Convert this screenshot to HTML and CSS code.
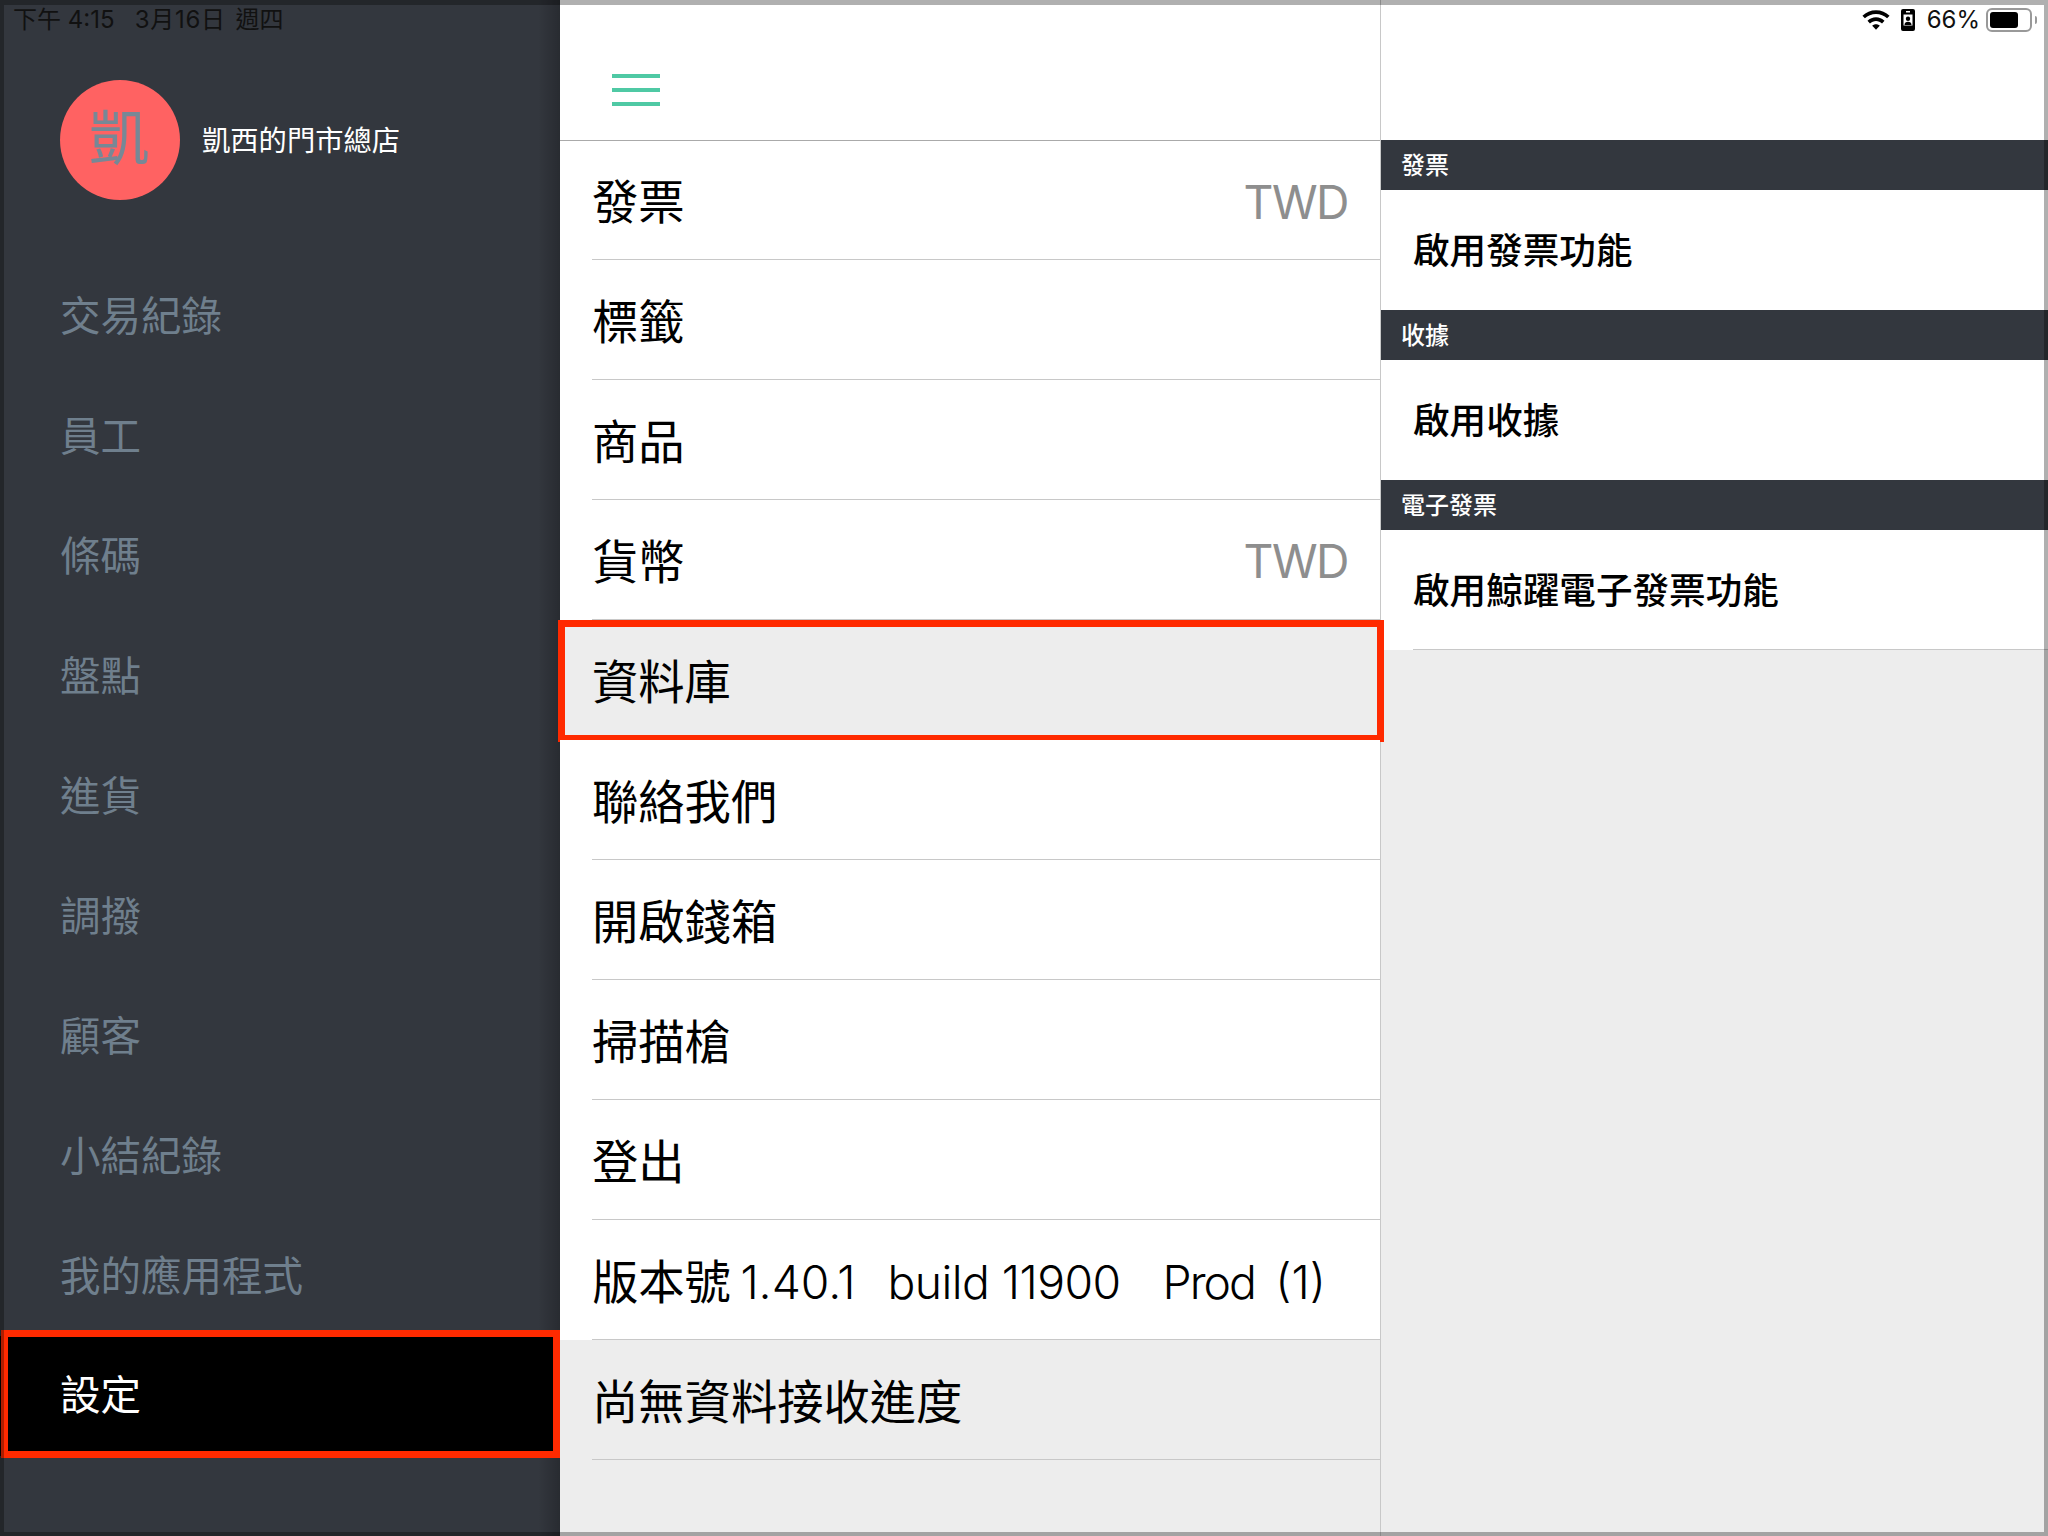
FILE: index.html
```html
<!DOCTYPE html>
<html lang="zh-Hant">
<head>
<meta charset="utf-8">
<title>設定</title>
<link rel="stylesheet" href="styles.css">
</head>
<body>
<div class="app">
  <aside class="sidebar">
    <div class="store">
      <div class="avatar">凱</div>
      <div class="store-name">凱西的門市總店</div>
    </div>
    <nav class="nav">
      <div class="nav-item">交易紀錄</div>
      <div class="nav-item">員工</div>
      <div class="nav-item">條碼</div>
      <div class="nav-item">盤點</div>
      <div class="nav-item">進貨</div>
      <div class="nav-item">調撥</div>
      <div class="nav-item">顧客</div>
      <div class="nav-item">小結紀錄</div>
      <div class="nav-item">我的應用程式</div>
      <div class="nav-item nav-active">設定<span class="callout callout-nav"></span></div>
    </nav>
  </aside>
  <main class="menu">
    <header class="menu-head">
      <div class="burger"><span></span><span></span><span></span></div>
    </header>
    <div class="list">
      <div class="row"><div class="row-in"><span>發票</span><span class="val">TWD</span></div></div>
      <div class="row"><div class="row-in"><span>標籤</span></div></div>
      <div class="row"><div class="row-in"><span>商品</span></div></div>
      <div class="row"><div class="row-in"><span>貨幣</span><span class="val">TWD</span></div></div>
      <div class="row row-sel"><div class="row-in"><span>資料庫</span></div><span class="callout callout-row"></span></div>
      <div class="row"><div class="row-in"><span>聯絡我們</span></div></div>
      <div class="row"><div class="row-in"><span>開啟錢箱</span></div></div>
      <div class="row"><div class="row-in"><span>掃描槍</span></div></div>
      <div class="row"><div class="row-in"><span>登出</span></div></div>
      <div class="row"><div class="row-in"><span class="ver"><span class="ver-cjk">版本號</span><span class="ver-code">1.40.1</span><span class="ver-build">build 11900</span><span class="ver-prod">Prod</span><span class="ver-num">(1)</span></span></div></div>
      <div class="row row-grey"><div class="row-in"><span>尚無資料接收進度</span></div></div>
    </div>
  </main>
  <section class="detail">
    <div class="detail-head"></div>
    <div class="sec-title">發票</div>
    <div class="sec-item">啟用發票功能</div>
    <div class="sec-title">收據</div>
    <div class="sec-item">啟用收據</div>
    <div class="sec-title">電子發票</div>
    <div class="sec-item sec-last"><div class="sec-last-in">啟用鯨躍電子發票功能</div></div>
  </section>
</div>

<div class="status">
  <div class="status-left">下午 4:15&nbsp;&nbsp; <span class="status-date">3月16日</span> 週四</div>
  <div class="status-right">
    <svg class="ic-wifi" width="28" height="20" viewBox="1 3 26 18.500"><path d="M14 3.200c-4.900 0-9.300 1.900-12.600 5l2.300 2.500c2.700-2.500 6.300-4 10.300-4s7.600 1.500 10.300 4l2.300-2.500c-3.300-3.100-7.700-5-12.600-5z"/><path d="M14 9.800c-3 0-5.800 1.200-7.900 3.100l2.300 2.500c1.500-1.300 3.500-2.200 5.600-2.200s4.100.9 5.600 2.200l2.300-2.500c-2.100-1.900-4.900-3.100-7.900-3.100z"/><path d="M14 16.200c-1.400 0-2.600.5-3.500 1.300l3.500 3.800 3.500-3.800c-.9-.8-2.100-1.300-3.500-1.300z"/></svg>
    <svg class="ic-lock" width="14" height="22" viewBox="0 0 14 22"><path fill-rule="evenodd" d="M2 0h10a2 2 0 0 1 2 2v18a2 2 0 0 1-2 2H2a2 2 0 0 1-2-2V2a2 2 0 0 1 2-2zm3 2v1.500h4V2zM2.500 5.500v11h9v-11zM7 7.500a2.200 2.200 0 1 1 0 4.400 2.200 2.200 0 0 1 0-4.400zM3.500 16c0-2 1.500-3.200 3.500-3.200s3.500 1.200 3.500 3.200z"/></svg>
    <span class="pct">66%</span>
    <div class="battery"><div class="battery-fill"></div></div>
    <div class="battery-nub"></div>
  </div>
</div>
<div class="frame"></div>
</body>
</html>
```
FILE: styles.css
```css
* { box-sizing: border-box; }
html, body { margin: 0; padding: 0; }
body {
  width: 2048px;
  height: 1536px;
  overflow: hidden;
  position: relative;
  font-family: Inter, "Noto Sans CJK TC", sans-serif;
  font-weight: 400;
  color: #000;
  background: #ededed;
}
.app { display: flex; height: 1536px; }

/* sidebar */
.sidebar {
  width: 560px;
  flex: none;
  background: #33373e;
  background-image: linear-gradient(to left, rgba(0,0,0,.22), rgba(0,0,0,0) 22px);
}
.store {
  display: flex;
  align-items: flex-start;
  gap: 22px;
  padding: 80px 0 0 60px;
  height: 256px;
}
.avatar {
  width: 120px;
  height: 120px;
  border-radius: 50%;
  background: #ff6262;
  color: #778896;
  font-size: 60px;
  line-height: 116px;
  text-align: center;
  padding-right: 2px;
}
.store-name {
  color: #fff;
  font-size: 28.300px;
  line-height: 122px;
}
.nav-item {
  height: 120px;
  line-height: 121px;
  padding-left: 60px;
  font-size: 40.500px;
  color: #6f7f8d;
  position: relative;
}
.nav-active { background: #000; color: #fff; line-height: 120px; }

/* callouts */
.callout {
  position: absolute;
  border: 7px solid #ff2a00;
  pointer-events: none;
}
.callout-nav { left: 1px; right: 0; top: -6px; bottom: -2px; }
.callout-row { left: -2px; right: -4px; top: 0; bottom: -2px; }

/* menu */
.menu {
  width: 821px;
  flex: none;
  display: flex;
  flex-direction: column;
  border-right: 1px solid #c8c8c8;
  background: #ededed;
}
.menu-head {
  height: 141px;
  background: #fff;
  border-bottom: 1px solid #aaa;
  padding: 74px 0 0 52px;
}
.burger { width: 48px; display: flex; flex-direction: column; gap: 10px; }
.burger span { display: block; height: 4px; background: #4fc9a4; }
.list { flex: 1; }
.row {
  height: 120px;
  padding-left: 32px;
  background: #fff;
  position: relative;
}
.row:first-child { height: 119px; }
.row-sel, .row-grey { background: #ededed; }
.row-in {
  height: 100%;
  display: flex;
  align-items: center;
  justify-content: space-between;
  padding-right: 32px;
  padding-bottom: 3px;
  border-bottom: 1px solid #c8c8c8;
  font-size: 46.300px;
}
.val { color: #8e8e8e; position: relative; top: 3px; letter-spacing: -1.500px; }
.ver { display: flex; align-items: baseline; font-weight: 350; }
.ver-cjk { font-weight: 400; }
.ver-code { margin-left: 9.500px; }
.ver-build { margin-left: 32px; letter-spacing: -.55px; }
.ver-prod { margin-left: 42px; letter-spacing: -2px; }
.ver-num { margin-left: 20.500px; }

/* detail */
.detail { flex: 1; background: #ededed; }
.detail-head { height: 140px; background: #fff; }
.sec-title {
  height: 50px;
  line-height: 52px;
  padding-left: 20px;
  background: #33373e;
  color: #fff;
  font-size: 24px;
  font-weight: 500;
}
.sec-item {
  height: 120px;
  line-height: 122px;
  padding-left: 32px;
  background: #fff;
  font-size: 36.600px;
  font-weight: 500;
}
.sec-last-in { height: 120px; border-bottom: 1px solid #c8c8c8; }

/* status bar */
.status {
  position: absolute;
  left: 0;
  right: 0;
  top: 5px;
  height: 30px;
  display: flex;
  justify-content: space-between;
  font-size: 24px;
  line-height: 30px;
  color: #111;
}
.status-left { padding-left: 13px; }
.status-date { letter-spacing: .7px; margin-right: 3px; }
.status-right { display: flex; align-items: center; padding-right: 11px; }
.ic-wifi { margin-right: 11px; }
.ic-lock { margin-right: 12px; }
.pct { margin-right: 6px; }
.battery {
  width: 46px;
  height: 24px;
  border: 2px solid #999;
  border-radius: 6px;
  padding: 2px;
}
.battery-fill { width: 28px; height: 100%; background: #000; border-radius: 3px; }
.battery-nub { width: 2px; height: 8px; margin-left: 3px; background: #999; border-radius: 0 2px 2px 0; }

/* device frame */
.frame {
  position: absolute;
  inset: 0;
  border-style: solid;
  border-width: 5px 4px 4px 4px;
  border-color: rgba(0,0,0,.31);
  pointer-events: none;
}
```
